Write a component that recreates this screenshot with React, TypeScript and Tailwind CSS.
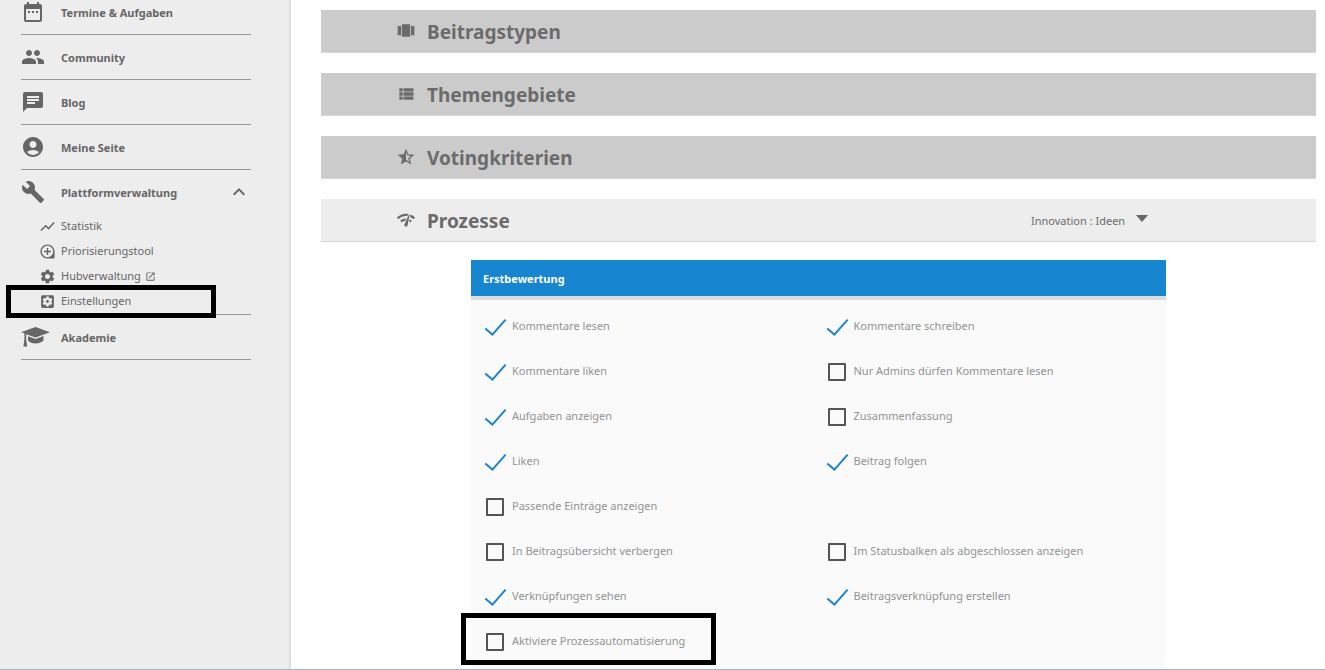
import React, { useState } from 'react';
import {
  MdAccountCircle,
  MdBuild,
  MdChat,
  MdDateRange,
  MdExpandLess,
  MdGroup,
  MdLoupe,
  MdNetworkCheck,
  MdOpenInNew,
  MdSettings,
  MdShowChart,
} from 'react-icons/md';

type IconProps = { className?: string };

const CarouselIcon: React.FC<IconProps> = ({ className }) => (
  <svg viewBox="0 0 24 24" fill="currentColor" className={className}>
    <path d="M7 19h10V4H7v15zm-5-2h4V6H2v11zM18 6v11h4V6h-4z" />
  </svg>
);

const ListIcon: React.FC<IconProps> = ({ className }) => (
  <svg viewBox="0 0 24 24" fill="currentColor" className={className}>
    <path d="M4 14h4v-4H4v4zm0 5h4v-4H4v4zM4 9h4V5H4v4zm5 5h12v-4H9v4zm0 5h12v-4H9v4zM9 5v4h12V5H9z" />
  </svg>
);

const StarHalfIcon: React.FC<IconProps> = ({ className }) => (
  <svg viewBox="0 0 24 24" fill="currentColor" className={className}>
    <path d="M22 9.24l-7.19-.62L12 2 9.19 8.63 2 9.24l5.46 4.73L5.82 21 12 17.27 18.18 21l-1.63-7.03L22 9.24zM12 15.4V6.1l1.71 4.04 4.38.38-3.32 2.88 1 4.28L12 15.4z" />
  </svg>
);

const SettingsBoxIcon: React.FC<IconProps> = ({ className }) => (
  <svg viewBox="0 0 24 24" fill="currentColor" className={className}>
    <path d="M12 10c-1.1 0-2 .9-2 2s.9 2 2 2 2-.9 2-2-.9-2-2-2zm7-7H5c-1.11 0-2 .9-2 2v14c0 1.1.89 2 2 2h14c1.11 0 2-.9 2-2V5c0-1.1-.89-2-2-2zm-1.75 9c0 .23-.02.46-.05.68l1.48 1.16c.13.11.17.3.08.45l-1.4 2.42c-.09.15-.27.21-.43.15l-1.74-.7c-.36.28-.76.51-1.18.69l-.26 1.85c-.03.17-.18.3-.35.3h-2.8c-.17 0-.32-.13-.35-.29l-.26-1.85c-.43-.18-.82-.41-1.18-.69l-1.74.7c-.16.06-.34 0-.43-.15l-1.4-2.42c-.09-.15-.05-.34.08-.45l1.48-1.16c-.03-.23-.05-.46-.05-.69 0-.23.02-.46.05-.68l-1.48-1.16c-.13-.11-.17-.3-.08-.45l1.4-2.42c.09-.15.27-.21.43-.15l1.74.7c.36-.28.76-.51 1.18-.69l.26-1.85c.03-.17.18-.3.35-.3h2.8c.17 0 .32.13.35.29l.26 1.85c.43.18.82.41 1.18.69l1.74-.7c.16-.06.34 0 .43.15l1.4 2.42c.09.15.05.34-.08.45l-1.48 1.16c.03.23.05.46.05.69z" />
  </svg>
);

const AcademyIcon: React.FC<IconProps> = ({ className }) => (
  <svg viewBox="0 0 29 20" fill="currentColor" className={className}>
    <path d="M14.5 0L29 5.2l-14.5 5.3L5.2 7.2v5l1 7.3H2.4l1-7.3V6.2L0 5.2z" />
    <path d="M7 9.2l7.5 2.8L22.5 9v4.6c-2 2-4.800 2.900-8 2.900S8.600 15.600 7 13.600z" />
  </svg>
);

const mainLinks = [
  { label: 'Termine & Aufgaben', icon: MdDateRange },
  { label: 'Community', icon: MdGroup },
  { label: 'Blog', icon: MdChat },
  { label: 'Meine Seite', icon: MdAccountCircle },
];

const adminLinks = [
  { label: 'Statistik', icon: MdShowChart },
  { label: 'Priorisierungstool', icon: MdLoupe },
  { label: 'Hubverwaltung', icon: MdSettings, external: true },
  { label: 'Einstellungen', icon: SettingsBoxIcon, marked: true },
];

const sections = [
  { label: 'Beitragstypen', icon: CarouselIcon },
  { label: 'Themengebiete', icon: ListIcon },
  { label: 'Votingkriterien', icon: StarHalfIcon },
];

// null leaves the grid cell empty
const options: ({ label: string; checked?: boolean; marked?: boolean } | null)[] = [
  { label: 'Kommentare lesen', checked: true },
  { label: 'Kommentare schreiben', checked: true },
  { label: 'Kommentare liken', checked: true },
  { label: 'Nur Admins dürfen Kommentare lesen' },
  { label: 'Aufgaben anzeigen', checked: true },
  { label: 'Zusammenfassung' },
  { label: 'Liken', checked: true },
  { label: 'Beitrag folgen', checked: true },
  { label: 'Passende Einträge anzeigen' },
  null,
  { label: 'In Beitragsübersicht verbergen' },
  { label: 'Im Statusbalken als abgeschlossen anzeigen' },
  { label: 'Verknüpfungen sehen', checked: true },
  { label: 'Beitragsverknüpfung erstellen', checked: true },
  { label: 'Aktiviere Prozessautomatisierung', marked: true },
];

const Option: React.FC<{ label: string; checked?: boolean; marked?: boolean }> = ({ label, checked, marked }) => {
  const [on, setOn] = useState(!!checked);

  return (
    <label className="relative flex h-[45px] items-center gap-[5px] text-[#929292]">
      <span className="grid h-6 w-6 shrink-0 place-items-center">
        <input
          type="checkbox"
          checked={on}
          onChange={(e) => setOn(e.target.checked)}
          className="col-start-1 row-start-1 h-[18px] w-[18px] appearance-none rounded-[1px] border-2 border-[#555] checked:border-transparent"
        />
        {on && (
          <svg viewBox="0 0 24 24" className="pointer-events-none col-start-1 row-start-1 h-6 w-6" fill="none" stroke="#1c84cf" strokeWidth="2">
            <path d="M2.3 13.6L9.4 19.6L22.6 4.6" />
          </svg>
        )}
      </span>
      {label}
      {marked && <span className="pointer-events-none absolute -left-[22px] -top-1.5 h-[52px] w-[255px] border-5 border-black" />}
    </label>
  );
};

const Sidebar: React.FC = () => (
  <aside className="w-[291px] shrink-0 overflow-hidden bg-[#ededed] pl-[21px] pr-10 text-[#666] shadow-[inset_-3px_0_3px_-2px_#d4d4d4]">
    <nav className="-mt-2.5">
      {mainLinks.map(({ label, icon: Icon }) => (
        <a key={label} href="#" className="flex h-[45px] items-center gap-4 border-b border-[#999] font-bold">
          <Icon className="h-6 w-6" />
          <span className="pt-0.5">{label}</span>
        </a>
      ))}

      <div className="border-b border-[#999]">
        <button type="button" className="flex h-11 w-full items-center gap-4 font-bold">
          <MdBuild className="h-6 w-6" />
          <span className="pt-0.5">Plattformverwaltung</span>
          <MdExpandLess className="ml-auto h-6 w-6" />
        </button>
        {adminLinks.map(({ label, icon: Icon, external, marked }) => (
          <a key={label} href="#" className="relative flex h-[25px] items-center pl-[18px]">
            <Icon className="mr-[5px] h-[17px] w-[17px]" />
            {label}
            {external && <MdOpenInNew className="ml-1 h-[11px] w-[11px]" />}
            {marked && <span className="absolute -left-[15px] -top-1 h-[33px] w-[210px] border-5 border-black" />}
          </a>
        ))}
      </div>

      <a href="#" className="flex h-[45px] items-center border-b border-[#999] font-bold">
        <span className="w-10">
          <AcademyIcon className="h-5 w-[29px]" />
        </span>
        <span className="pt-0.5">Akademie</span>
      </a>
    </nav>
  </aside>
);

export default function App() {
  return (
    <div className="flex h-screen overflow-hidden border-b border-[#aab2c0] bg-white font-['Noto_Sans','Open_Sans',sans-serif] text-[11px]">
      <Sidebar />

      <main className="flex-1 overflow-hidden pl-[30px] pr-[9px] pt-2.5 text-[#6b6b6b]">
        <div className="flex flex-col gap-5">
          {sections.map(({ label, icon: Icon }) => (
            <button key={label} type="button" className="flex h-[43px] items-center gap-[11px] border-b border-[#d8d8d8] bg-[#cbcbcb] pl-[75px] text-[19px] font-bold">
              <Icon className="h-5 w-5" />
              <span className="pt-0.5">{label}</span>
            </button>
          ))}

          <div className="flex h-[43px] items-center border-b border-[#d5d5d5] bg-[#ededed] pl-[75px] pr-[168px]">
            <h2 className="flex items-center gap-[11px] text-[19px] font-bold">
              <MdNetworkCheck className="h-5 w-5" />
              <span className="pt-0.5">Prozesse</span>
            </h2>
            <div className="ml-auto flex items-center gap-2.5">
              <select aria-label="Prozess" className="appearance-none bg-transparent pt-0.5">
                <option>Innovation : Ideen</option>
              </select>
              <svg viewBox="0 0 12 7" className="mb-1 h-[7px] w-3" fill="#666">
                <path d="M0 0h12L6 7z" />
              </svg>
            </div>
          </div>
        </div>

        <section className="mx-[150px] mt-[18px] bg-[#fafafa] pb-12">
          <h3 className="flex h-10 items-center border-b-4 border-[#dcdcdc] bg-[#1785d0] px-3 font-bold text-white">
            <span className="pt-0.5">Erstbewertung</span>
          </h3>
          <div className="grid grid-cols-2 pl-3 pt-1">
            {options.map((option, i) => (option ? <Option key={option.label} {...option} /> : <div key={i} />))}
          </div>
        </section>
      </main>
    </div>
  );
}
